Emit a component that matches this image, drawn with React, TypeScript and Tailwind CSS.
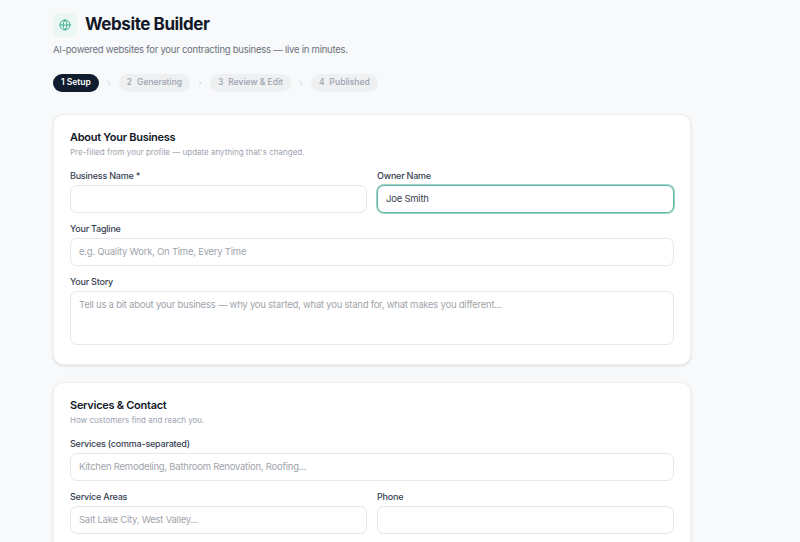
import React from "react";
import { Globe, ChevronRight } from "lucide-react";

const font = { fontFamily: "Inter, 'Noto Sans', sans-serif" };

const Label: React.FC<{ children: React.ReactNode }> = ({ children }) => (
  <div className="text-[9px] leading-[11px] font-medium text-[#374151] mb-[4px] tracking-tight">{children}</div>
);

const Input: React.FC<{ placeholder?: string; value?: string; focused?: boolean }> = ({ placeholder, value, focused }) => (
  <div
    className={
      "h-[28px] rounded-[7px] border bg-white px-2 flex items-center text-[9.5px] tracking-tight " +
      (focused ? "border-[#5fb8a3] ring-1 ring-[#5fb8a3]/60" : "border-[#e5e7eb]")
    }
  >
    {value ? <span className="text-[#374151]">{value}</span> : <span className="text-[#a0a4ab]">{placeholder}</span>}
  </div>
);

const steps = ["Generating", "Review & Edit", "Published"];

export default function App() {
  return (
    <div className="min-h-[542px] bg-[#f8f9fa] pl-[53px] pt-[12px] overflow-hidden h-[542px]" style={font}>
      <div className="w-[638px]">
        <div className="flex items-center gap-[8px]">
          <div className="w-[24px] h-[24px] rounded-[6px] bg-[#eaf7f3] flex items-center justify-center">
            <Globe className="w-[12px] h-[12px] text-[#3fae92]" strokeWidth={2} />
          </div>
          <h1 className="text-[17px] font-bold text-[#111827] tracking-tight">Website Builder</h1>
        </div>
        <p className="text-[9.5px] text-[#6b7280] mt-[5px] tracking-tight">
          AI-powered websites for your contracting business — live in minutes.
        </p>
        <div className="flex items-center gap-[6px] mt-[17px]">
          <span className="h-[18px] px-[8px] rounded-full bg-[#0f1d2e] text-white text-[8.5px] font-semibold flex items-center gap-[4px]">
            1 Setup
          </span>
          {steps.map((s, i) => (
            <React.Fragment key={s}>
              <ChevronRight className="w-[8px] h-[8px] text-[#c7cbd1]" />
              <span className="h-[18px] px-[8px] rounded-full bg-[#eef0f2] text-[#9ca3af] text-[8.5px] font-medium flex items-center gap-[5px]">
                <span>{i + 2}</span>
                <span>{s}</span>
              </span>
            </React.Fragment>
          ))}
        </div>

        <div className="mt-[22px] bg-white rounded-[10px] border border-[#eef0f2] shadow-sm px-[16px] pt-[15px] pb-[19px]">
          <h2 className="text-[11px] leading-[14px] font-semibold text-[#111827] tracking-tight">About Your Business</h2>
          <p className="text-[8px] leading-[10px] text-[#9ca3af] mt-[3px] mb-[13px]">Pre-filled from your profile — update anything that's changed.</p>
          <div className="grid grid-cols-2 gap-[10px]">
            <div>
              <Label>Business Name *</Label>
              <Input />
            </div>
            <div>
              <Label>Owner Name</Label>
              <Input value="Joe Smith" focused />
            </div>
          </div>
          <div className="mt-[10px]">
            <Label>Your Tagline</Label>
            <Input placeholder="e.g. Quality Work, On Time, Every Time" />
          </div>
          <div className="mt-[10px]">
            <Label>Your Story</Label>
            <div className="h-[54px] rounded-[7px] border border-[#e5e7eb] px-2 pt-[6px] text-[9.5px] text-[#a0a4ab] tracking-tight">
              Tell us a bit about your business — why you started, what you stand for, what makes you different...
            </div>
          </div>
        </div>

        <div className="mt-[17px] bg-white rounded-[10px] border border-[#eef0f2] shadow-sm px-[16px] pt-[15px] pb-[19px]">
          <h2 className="text-[11px] leading-[14px] font-semibold text-[#111827] tracking-tight">Services &amp; Contact</h2>
          <p className="text-[8px] leading-[10px] text-[#9ca3af] mt-[3px] mb-[13px]">How customers find and reach you.</p>
          <div>
            <Label>Services (comma-separated)</Label>
            <Input placeholder="Kitchen Remodeling, Bathroom Renovation, Roofing..." />
          </div>
          <div className="grid grid-cols-2 gap-[10px] mt-[10px]">
            <div>
              <Label>Service Areas</Label>
              <Input placeholder="Salt Lake City, West Valley..." />
            </div>
            <div>
              <Label>Phone</Label>
              <Input />
            </div>
          </div>
        </div>
      </div>
    </div>
  );
}
